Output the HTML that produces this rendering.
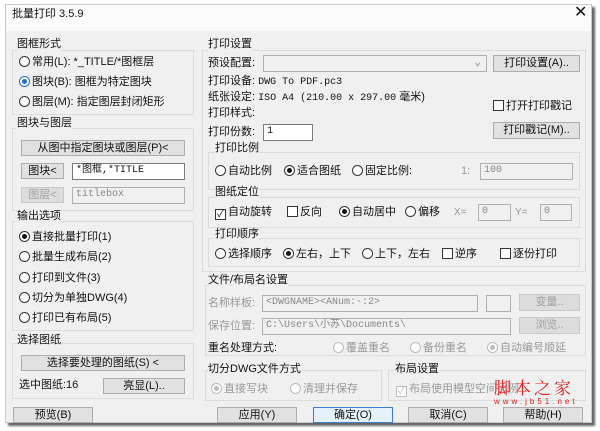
<!DOCTYPE html>
<html><head><meta charset="utf-8"><style>
*{box-sizing:border-box;margin:0;padding:0}
body{width:600px;height:431px;background:#fff;position:relative;overflow:hidden;font:11px/13px "Liberation Sans","Noto Sans CJK SC",sans-serif;color:#111}
.dlg{position:absolute;left:5px;top:4px;width:587px;height:419px;background:#f0f0f0;border:1px solid #c8c8c8;box-shadow:3px 3px 2px #666}
.tb{position:absolute;left:0;top:0;width:100%;height:26px;background:#fbfbfb}
.a{position:absolute;white-space:nowrap}
.g{position:absolute;border:1px solid #dcdcdc}
.btn{position:absolute;background:#e1e1e1;border:1px solid #adadad;text-align:center;line-height:14px;white-space:nowrap}
.dis{color:#a0a0a0;background:#dcdcdc;border-color:#c8c8c8}
.in{position:absolute;background:#fff;border:1px solid #7a7a7a;padding-left:3px;line-height:14px;font-family:"Liberation Mono","Noto Sans CJK SC",monospace;font-size:10px;white-space:nowrap}
.ind{background:#f0f0f0;border-color:#b0b0b0;color:#888}
.r{display:inline-block;width:11px;height:11px;border:1px solid #333;border-radius:50%;vertical-align:-2px;margin-right:2px;background:#fff;position:relative}
.r.on::after{content:"";position:absolute;left:2px;top:2px;width:5px;height:5px;border-radius:50%;background:#111}
.r.blue{border-color:#1e6fd0}.r.blue::after{background:#1e6fd0}
.r.d{border-color:#bbb}.r.d.on::after{background:#bbb}
.c{display:inline-block;width:11px;height:11px;border:1px solid #333;vertical-align:-2px;margin-right:2px;background:#fff;font-size:10px;line-height:9px;text-align:center}
.gr{color:#999}
</style></head><body>
<div class="dlg">
<div class="tb"></div>
</div>
<div class="a" style="left:12px;top:8px">批量打印 3.5.9</div>
<div class="a" style="left:574px;top:6px;font-size:16px">✕</div>

<!-- left groups -->
<div class="g" style="left:12px;top:50px;width:182px;height:65px"></div>
<div class="a" style="left:17px;top:38px;background:#f0f0f0">图框形式</div>
<div class="a" style="left:19px;top:56px"><span class="r"></span>常用(L): *_TITLE/*图框层</div>
<div class="a" style="left:19px;top:76px"><span class="r on blue"></span>图块(B): 图框为特定图块</div>
<div class="a" style="left:19px;top:96px"><span class="r"></span>图层(M): 指定图层封闭矩形</div>

<div class="g" style="left:12px;top:128px;width:182px;height:83px"></div>
<div class="a" style="left:17px;top:117px;background:#f0f0f0">图块与图层</div>
<div class="btn" style="left:21px;top:140px;width:164px;height:16px">从图中指定图块或图层(P)&lt;</div>
<div class="btn" style="left:21px;top:163px;width:43px;height:16px">图块&lt;</div>
<div class="in" style="left:72px;top:163px;width:113px;height:17px">*图框,*TITLE</div>
<div class="btn dis" style="left:21px;top:187px;width:43px;height:16px">图层&lt;</div>
<div class="in ind" style="left:72px;top:187px;width:113px;height:17px">titlebox</div>

<div class="g" style="left:12px;top:221px;width:182px;height:110px"></div>
<div class="a" style="left:17px;top:210px;background:#f0f0f0">输出选项</div>
<div class="a" style="left:19px;top:231px"><span class="r on"></span>直接批量打印(1)</div>
<div class="a" style="left:19px;top:251px"><span class="r"></span>批量生成布局(2)</div>
<div class="a" style="left:19px;top:272px"><span class="r"></span>打印到文件(3)</div>
<div class="a" style="left:19px;top:292px"><span class="r"></span>切分为单独DWG(4)</div>
<div class="a" style="left:19px;top:312px"><span class="r"></span>打印已有布局(5)</div>

<div class="g" style="left:12px;top:343px;width:182px;height:56px"></div>
<div class="a" style="left:17px;top:334px;background:#f0f0f0">选择图纸</div>
<div class="btn" style="left:21px;top:355px;width:164px;height:16px">选择要处理的图纸(S) &lt;</div>
<div class="a" style="left:19px;top:379px">选中图纸:16</div>
<div class="btn" style="left:103px;top:378px;width:82px;height:16px">亮显(L)..</div>

<!-- right -->
<div class="g" style="left:202px;top:50px;width:384px;height:222px"></div>
<div class="a" style="left:208px;top:38px;background:#f0f0f0">打印设置</div>
<div class="a" style="left:208px;top:57px">预设配置:</div>
<div class="in ind" style="left:263px;top:55px;width:224px;height:17px;text-align:right;padding-right:5px;font-size:11px">⌄</div>
<div class="btn" style="left:493px;top:55px;width:87px;height:17px">打印设置(A)..</div>
<div class="a" style="left:208px;top:75px">打印设备: <span style="font-family:'Liberation Mono',monospace;font-size:10px">DWG To PDF.pc3</span></div>
<div class="a" style="left:208px;top:91px">纸张设定: <span style="font-family:'Liberation Mono',monospace;font-size:10px">ISO A4 (210.00 x 297.00</span> 毫米)</div>
<div class="a" style="left:208px;top:107px">打印样式:</div>
<div class="a" style="left:493px;top:100px"><span class="c"></span>打开打印戳记</div>
<div class="a" style="left:208px;top:126px">打印份数:</div>
<div class="in" style="left:263px;top:124px;width:50px;height:17px">1</div>
<div class="btn" style="left:493px;top:122px;width:87px;height:17px">打印戳记(M)..</div>

<div class="g" style="left:208px;top:152px;width:372px;height:38px"></div>
<div class="a" style="left:215px;top:142px;background:#f0f0f0">打印比例</div>
<div class="a" style="left:215px;top:165px"><span class="r"></span>自动比例</div>
<div class="a" style="left:284px;top:165px"><span class="r on"></span>适合图纸</div>
<div class="a" style="left:352px;top:165px"><span class="r"></span>固定比例:</div>
<div class="a gr" style="left:461px;top:165px">1:</div>
<div class="in ind" style="left:480px;top:163px;width:93px;height:17px">100</div>

<div class="g" style="left:208px;top:197px;width:372px;height:31px"></div>
<div class="a" style="left:215px;top:186px;background:#f0f0f0">图纸定位</div>
<div class="a" style="left:215px;top:206px"><span class="c">✓</span>自动旋转</div>
<div class="a" style="left:287px;top:206px"><span class="c"></span>反向</div>
<div class="a" style="left:339px;top:206px"><span class="r on"></span>自动居中</div>
<div class="a" style="left:405px;top:206px"><span class="r"></span>偏移</div>
<div class="a gr" style="left:454px;top:206px;font-size:10px">X=</div>
<div class="in ind" style="left:478px;top:204px;width:33px;height:17px">0</div>
<div class="a gr" style="left:515px;top:206px;font-size:10px">Y=</div>
<div class="in ind" style="left:540px;top:204px;width:32px;height:17px">0</div>

<div class="g" style="left:208px;top:238px;width:372px;height:29px"></div>
<div class="a" style="left:215px;top:228px;background:#f0f0f0">打印顺序</div>
<div class="a" style="left:215px;top:248px"><span class="r"></span>选择顺序</div>
<div class="a" style="left:283px;top:248px"><span class="r on"></span>左右，上下</div>
<div class="a" style="left:362px;top:248px"><span class="r"></span>上下，左右</div>
<div class="a" style="left:442px;top:248px"><span class="c"></span>逆序</div>
<div class="a" style="left:500px;top:248px"><span class="c"></span>逐份打印</div>

<div class="g" style="left:205px;top:285px;width:381px;height:71px"></div>
<div class="a" style="left:208px;top:274px;background:#f0f0f0">文件/布局名设置</div>
<div class="a gr" style="left:208px;top:297px">名称样板:</div>
<div class="in ind" style="left:262px;top:295px;width:216px;height:17px">&lt;DWGNAME&gt;&lt;ANum:-:2&gt;</div>
<div class="in ind" style="left:486px;top:295px;width:25px;height:17px"></div>
<div class="btn dis" style="left:519px;top:294px;width:61px;height:17px">变量..</div>
<div class="a gr" style="left:208px;top:320px">保存位置:</div>
<div class="in ind" style="left:262px;top:318px;width:249px;height:17px">C:\Users\小苏\Documents\</div>
<div class="btn dis" style="left:519px;top:317px;width:61px;height:17px">浏览..</div>
<div class="a" style="left:208px;top:342px">重名处理方式:</div>
<div class="a gr" style="left:333px;top:342px"><span class="r d"></span>覆盖重名</div>
<div class="a gr" style="left:410px;top:342px"><span class="r d"></span>备份重名</div>
<div class="a gr" style="left:487px;top:342px"><span class="r d on"></span>自动编号顺延</div>

<div class="g" style="left:205px;top:370px;width:177px;height:31px"></div>
<div class="a" style="left:208px;top:363px;background:#f0f0f0">切分DWG文件方式</div>
<div class="a gr" style="left:211px;top:383px"><span class="r d on"></span>直接写块</div>
<div class="a gr" style="left:290px;top:383px"><span class="r d"></span>清理并保存</div>

<div class="g" style="left:388px;top:370px;width:198px;height:31px"></div>
<div class="a" style="left:395px;top:363px;background:#f0f0f0">布局设置</div>
<div class="a gr" style="left:396px;top:383px"><span class="c" style="border-color:#bbb;color:#bbb">✓</span>布局使用模型空间比例</div>
<div class="a" style="left:494px;top:377px;color:#e02020;font-size:17px;line-height:20px;letter-spacing:3px;font-family:'Noto Serif CJK SC',serif">脚本之家</div>
<div class="a" style="left:494px;top:397px;color:#e02020;font-size:8px;line-height:9px;letter-spacing:3px">www.jb51.net</div>

<div class="btn" style="left:13px;top:407px;width:80px;height:16px">预览(B)</div>
<div class="btn" style="left:217px;top:407px;width:80px;height:16px">应用(Y)</div>
<div class="btn" style="left:313px;top:407px;width:80px;height:16px;border-color:#3c7fd0;background:#e5f1fb">确定(O)</div>
<div class="btn" style="left:408px;top:407px;width:80px;height:16px">取消(C)</div>
<div class="btn" style="left:503px;top:407px;width:80px;height:16px">帮助(H)</div>
</body></html>
